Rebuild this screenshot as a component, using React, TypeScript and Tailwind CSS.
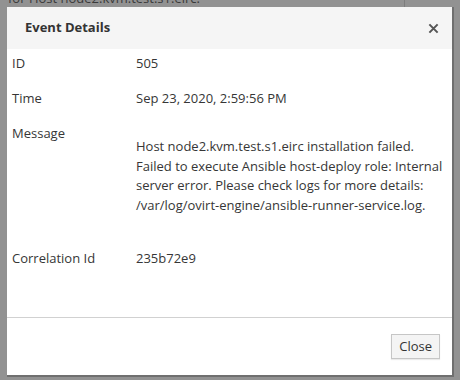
import React from 'react';

const rows = [
    { label: 'ID', value: '505' },
    { label: 'Time', value: 'Sep 23, 2020, 2:59:56 PM' },
];

const App: React.FC = () => {
    return (
        <div className="relative w-[460px] h-[380px] overflow-hidden bg-[#929292] font-['Open_Sans',sans-serif] text-[13px] text-[#363636]">
            {/* page behind the dialog */}
            <div className="absolute left-[8px] top-[-11px] text-[#3a3a3a] text-[13px] whitespace-nowrap">for Host node2.kvm.test.s1.eirc.</div>
            <div className="absolute left-[404px] top-0 h-[8px] w-px bg-[#7d7d7d]" />

            <div className="absolute left-[7px] top-[7px] w-[447px] h-[370px] bg-white border-r-2 border-b-2 border-[#6f6f6f] flex flex-col">
                <div className="h-[42px] bg-[#f5f5f5] flex items-center justify-between pl-[18px] pr-[13px]">
                    <h3 className="font-bold text-[13px] text-[#333]">Event Details</h3>
                    <button className="text-[#555]">
                        <svg width="11" height="11" viewBox="0 0 12 12">
                            <path d="M1.5 1.5 L10.5 10.5 M10.5 1.5 L1.5 10.5" stroke="#555" strokeWidth="2.2" />
                        </svg>
                    </button>
                </div>

                <div className="flex-1 pl-[5px] pt-[4px] leading-[20px]">
                    {rows.map((r) => (
                        <div key={r.label} className="grid grid-cols-[124px_1fr] h-[35px]">
                            <div>{r.label}</div>
                            <div>{r.value}</div>
                        </div>
                    ))}
                    <div className="grid grid-cols-[124px_1fr]">
                        <div>Message</div>
                        <div className="pt-[14px] leading-[19.5px] whitespace-nowrap">
                            Host node2.kvm.test.s1.eirc installation failed.<br />
                            Failed to execute Ansible host-deploy role: Internal<br />
                            server error. Please check logs for more details:<br />
                            /var/log/ovirt-engine/ansible-runner-service.log.
                        </div>
                    </div>
                    <div className="grid grid-cols-[124px_1fr] mt-[33px]">
                        <div>Correlation Id</div>
                        <div>235b72e9</div>
                    </div>
                </div>

                <div className="h-[58px] border-t border-[#d1d1d1] flex items-center justify-end pr-[12px]">
                    <button className="h-[25px] px-[7px] bg-[#f4f4f4] border border-[#c6c6c6] shadow-[0_1px_1px_rgba(0,0,0,0.08)] text-[13px] text-[#333]">Close</button>
                </div>
            </div>
        </div>
    );
};

export default App;
